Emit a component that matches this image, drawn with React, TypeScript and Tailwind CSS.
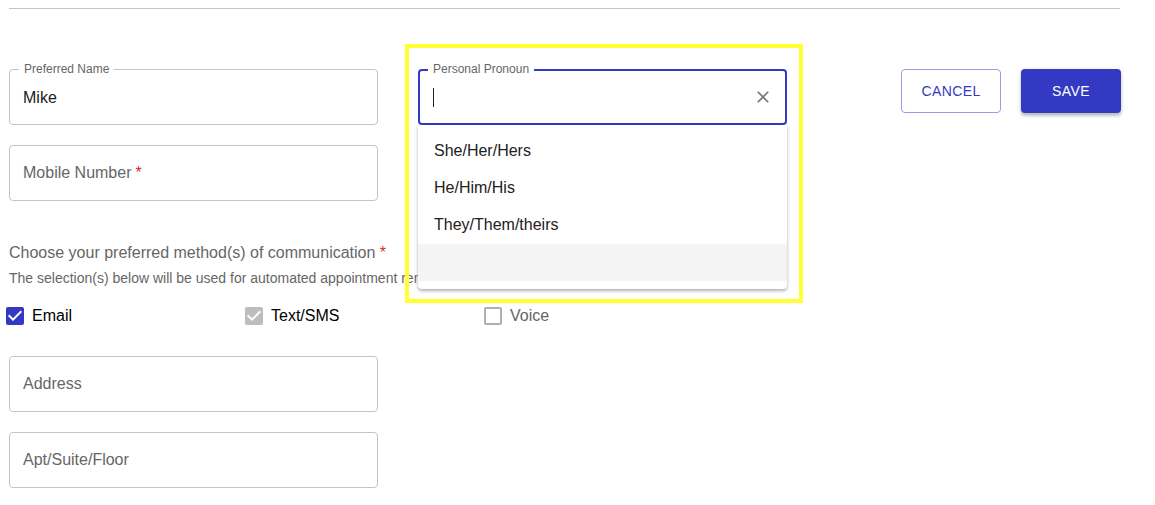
import React from "react";

const font = { fontFamily: '"Liberation Sans", Arial, sans-serif' };

function Field({ label, value, required }: { label: string; value?: string; required?: boolean }) {
  return (
    <div className="relative h-[56px] w-[369px] rounded-[4px] border border-[#c4c4c4]">
      {value !== undefined ? (
        <>
          <span className="absolute left-[9px] top-[-8px] bg-white px-[5px] text-[12px] leading-[14px] text-[#666666]">
            {label}
          </span>
          <div className="flex h-full items-center pl-[13px] pt-[2px] text-[16px] text-[#212121]">{value}</div>
        </>
      ) : (
        <div className="flex h-full items-center pl-[13px] text-[16px] text-[#666666]">
          {label}
          {required && <span className="ml-[4px] text-[#d32f2f]">*</span>}
        </div>
      )}
    </div>
  );
}

function CheckIcon({ state }: { state: "on" | "disabled" | "off" }) {
  if (state === "off") {
    return (
      <svg width="24" height="24" viewBox="0 0 24 24" fill="#b0b0b0">
        <path d="M19 5v14H5V5h14m0-2H5c-1.1 0-2 .9-2 2v14c0 1.1.9 2 2 2h14c1.1 0 2-.9 2-2V5c0-1.1-.9-2-2-2z" />
      </svg>
    );
  }
  return (
    <svg width="24" height="24" viewBox="0 0 24 24" fill={state === "on" ? "#3339c2" : "#bdbdbd"}>
      <path d="M19 3H5c-1.11 0-2 .9-2 2v14c0 1.1.89 2 2 2h14c1.11 0 2-.9 2-2V5c0-1.1-.89-2-2-2zm-9 14l-5-5 1.41-1.41L10 14.17l7.59-7.59L19 8l-9 9z" />
    </svg>
  );
}

export default function App() {
  return (
    <div className="relative h-[505px] w-[1155px] overflow-hidden bg-white" style={font}>
      <div className="ml-[9px] mt-[8px] h-px w-[1111px] bg-[#c4c4c4]" />

      {/* top row */}
      <div className="mt-[60px] flex items-start">
        <div className="ml-[9px] flex flex-col gap-[20px]">
          <Field label="Preferred Name" value="Mike" />
          <Field label="Mobile Number" required />
        </div>

        <div className="relative z-10 ml-[40px]">
          {/* highlight */}
          <div className="pointer-events-none absolute left-[-13px] top-[-25px] h-[259px] w-[398px] border-[4px] border-[#ffff33]" />

          <div className="relative h-[56px] w-[369px] rounded-[4px] border-2 border-[#3339c2]">
            <span className="absolute left-[8px] top-[-9px] bg-white px-[5px] text-[12px] leading-[14px] text-[#666666]">
              Personal Pronoun
            </span>
            <div className="flex h-full items-center pl-[13px] pr-[12px]">
              <div className="h-[19px] w-px bg-[#212121]" />
              <svg className="ml-auto" width="20" height="20" viewBox="0 0 24 24" fill="#757575">
                <path d="M19 6.41 17.59 5 12 10.59 6.41 5 5 6.41 10.59 12 5 17.59 6.41 19 12 13.41 17.59 19 19 17.59 13.41 12z" />
              </svg>
            </div>
          </div>

          {/* listbox */}
          <div className="absolute left-0 top-full w-[369px] rounded-b-[4px] bg-white py-[8px] text-[16px] text-[#212121] shadow-[0_2px_3px_rgba(0,0,0,0.25),0_1px_6px_rgba(0,0,0,0.08)]">
            {["She/Her/Hers", "He/Him/His", "They/Them/theirs"].map((t) => (
              <div key={t} className="flex h-[37px] items-center pl-[16px] pb-[2px]">
                {t}
              </div>
            ))}
            <div className="h-[37px] bg-[#f4f4f4]" />
          </div>
        </div>

        <div className="ml-auto mr-[34px] flex gap-[20px]">
          <button className="h-[44px] w-[100px] rounded-[4px] border border-[#9a9de3] text-[14px] tracking-[0.4px] text-[#3339c2]">
            CANCEL
          </button>
          <button className="h-[44px] w-[100px] rounded-[4px] bg-[#3339c2] text-[14px] tracking-[0.4px] text-white shadow-[0_3px_3px_rgba(0,0,0,0.2),0_1px_5px_rgba(0,0,0,0.12)]">
            SAVE
          </button>
        </div>
      </div>

      {/* communication */}
      <div className="ml-[9px] mt-[42px] text-[16px] leading-[19px] text-[#666666]">
        Choose your preferred method(s) of communication <span className="text-[#d32f2f]">*</span>
      </div>
      <div className="ml-[9px] mt-[8px] text-[14px] leading-[16px] text-[#666666]">
        The selection(s) below will be used for automated appointment reminders and notifications.
      </div>
      <div className="ml-[3px] mt-[18px] flex text-[16px] text-black">
        {[
          { t: "Email", s: "on" as const },
          { t: "Text/SMS", s: "disabled" as const },
          { t: "Voice", s: "off" as const },
        ].map((c) => (
          <div key={c.t} className="flex w-[239px] items-center gap-[5px]">
            <CheckIcon state={c.s} />
            <span className={c.s === "off" ? "text-[#666666]" : ""}>{c.t}</span>
          </div>
        ))}
      </div>

      <div className="ml-[9px] mt-[28px] flex flex-col gap-[20px]">
        <Field label="Address" />
        <Field label="Apt/Suite/Floor" />
      </div>
    </div>
  );
}
